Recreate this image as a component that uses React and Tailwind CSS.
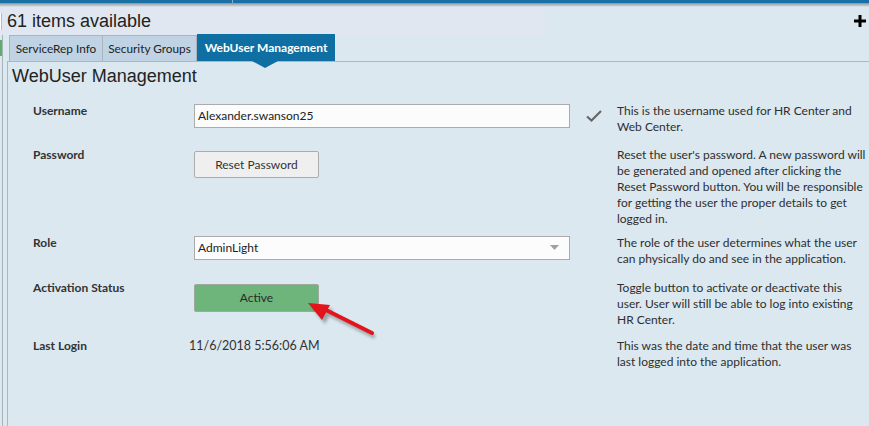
import React from 'react';

const FONT = { fontFamily: 'Lato, "Open Sans", sans-serif' };

const ROWS = [
    { id: 'user', label: 'Username', mt: 'mt-0', lines: ['This is the username used for HR Center and', 'Web Center.'] },
    {
        id: 'pass',
        label: 'Password',
        mt: 'mt-[12px]',
        lines: [
            "Reset the user's password. A new password will",
            'be generated and opened after clicking the',
            'Reset Password button. You will be responsible',
            'for getting the user the proper details to get',
            'logged in.',
        ],
    },
    { id: 'role', label: 'Role', mt: 'mt-[8px]', lines: ['The role of the user determines what the user', 'can physically do and see in the application.'] },
    {
        id: 'status',
        label: 'Activation Status',
        mt: 'mt-[13px]',
        lines: ['Toggle button to activate or deactivate this', 'user. User will still be able to log into existing', 'HR Center.'],
    },
    { id: 'login', label: 'Last Login', mt: 'mt-[10px]', lines: ['This was the date and time that the user was', 'last logged into the application.'] },
];

function Control({ id }) {
    if (id === 'user') {
        return (
            <div className="mt-[1px] w-[376px] h-[24px] border border-[#ababab] bg-[#fcfcfc] flex items-center px-[3px] text-[12px] text-[#222]">
                Alexander.swanson25
            </div>
        );
    }
    if (id === 'pass') {
        return (
            <button className="mt-[4px] w-[125px] h-[27px] border border-[#acacac] rounded-[2px] bg-[#efefef] text-[12px] text-[#333]">
                Reset Password
            </button>
        );
    }
    if (id === 'role') {
        return (
            <div className="mt-[1px] w-[376px] h-[24px] border border-[#ababab] bg-[#fcfcfc] flex items-center justify-between px-[3px] text-[12px] text-[#222]">
                <span>AdminLight</span>
                <svg width="9" height="6" viewBox="0 0 9 6" className="mr-[7px]">
                    <path d="M0 0h9L4.5 5z" fill="#a0a0a0" />
                </svg>
            </div>
        );
    }
    if (id === 'status') {
        return (
            <button className="mt-[4px] w-[125px] h-[28px] border border-[#9ea89f] rounded-[2px] bg-[#6db57a] text-[12px] text-[#2b2b2b]">
                Active
            </button>
        );
    }
    return <div className="-ml-[5px] text-[12.5px] text-[#333]">11/6/2018 5:56:06 AM</div>;
}

export default function App() {
    return (
        <div className="relative min-h-screen bg-[#dbe8f0] overflow-hidden" style={FONT}>
            {/* top bar */}
            <div className="h-[3px] bg-[#1870a4] flex">
                <div className="w-[232px]" />
                <div className="w-[1px] bg-[#7fb0d0]" />
            </div>
            <div className="h-[4px] bg-gradient-to-b from-[#8c9299] to-[#dde5ee]" />

            {/* header */}
            <div className="h-[28px] flex items-center">
                <div className="flex items-center h-full w-[545px] bg-[#e0e7f0]">
                    <div className="w-[2px] h-[17px] bg-white border-r border-[#b6bcc4]" />
                    <span className="ml-[5px] text-[18px] text-[#222]" style={{ fontFamily: '"Liberation Sans", Arial, sans-serif' }}>
                        61 items available
                    </span>
                </div>
                <div className="flex-1 flex justify-end pr-[3px]">
                    <svg width="12" height="12" viewBox="0 0 12 12">
                        <rect x="0" y="4.5" width="12" height="3" fill="#000" />
                        <rect x="4.5" y="0" width="3" height="12" fill="#000" />
                    </svg>
                </div>
            </div>

            <div className="flex">
                {/* left chrome */}
                <div className="w-[7px] shrink-0 flex">
                    <div className="w-[3px] border-r border-[#a9b1b9] flex flex-col pt-[5px]">
                        <div className="h-[16px] bg-[#5fae6b]" />
                    </div>
                </div>

                <div className="flex-1 min-h-[391px] flex flex-col">
                    {/* tabs */}
                    <div className="flex items-end h-[26px] pl-[2px] text-[11.8px]">
                        <div className="h-[26px] w-[94px] flex items-center justify-center bg-[#bfd3e5] border border-b-0 border-[#aab4bf] text-[#222]">
                            ServiceRep Info
                        </div>
                        <div className="h-[26px] w-[94px] flex items-center justify-center bg-[#bfd3e5] border border-l-0 border-b-0 border-[#aab4bf] text-[#222]">
                            Security Groups
                        </div>
                        <div className="relative h-[27px] w-[138px] flex items-center justify-center bg-[#0f6fa3] text-white font-bold text-[12px]">
                            WebUser Management
                            <svg width="26" height="7" viewBox="0 0 26 7" className="absolute left-[55px] -bottom-[7px]">
                                <path d="M0 0h26L13 7z" fill="#0f6fa3" />
                            </svg>
                        </div>
                    </div>

                    {/* panel */}
                    <div className="flex-1 border-l border-t border-[#b2b6ba] pl-[4px] pt-[4px]">
                        <h2 className="text-[18px] leading-[21px] text-[#222]" style={{ fontFamily: '"Liberation Sans", Arial, sans-serif' }}>
                            WebUser Management
                        </h2>

                        <div className="mt-[16px] pl-[21px] flex flex-col text-[#333]">
                            {ROWS.map(row => (
                                <div key={row.id} className={`flex items-start ${row.mt}`}>
                                    <div className="w-[161px] shrink-0 text-[12px] leading-[16px] font-bold text-[#333]">{row.label}</div>
                                    <div className="w-[376px] shrink-0 leading-[16px]">
                                        <Control id={row.id} />
                                    </div>
                                    <div className="w-[48px] shrink-0 flex justify-center pt-[7px]">
                                        {row.id === 'user' && (
                                            <svg width="16" height="12" viewBox="0 0 16 12">
                                                <path d="M1 6.5l4.5 4L15 1" fill="none" stroke="#666" strokeWidth="2.2" />
                                            </svg>
                                        )}
                                    </div>
                                    <div className="flex-1 -ml-[1px] text-[12px] leading-[16px] text-[#2e2e2e] whitespace-nowrap">
                                        {row.lines.map(l => (
                                            <div key={l}>{l}</div>
                                        ))}
                                    </div>
                                </div>
                            ))}
                        </div>
                    </div>
                </div>
            </div>

            {/* annotation arrow */}
            <svg width="90" height="50" viewBox="0 0 90 50" className="absolute left-[300px] top-[294px]">
                <g opacity="0.45" transform="translate(3 4)" style={{ filter: 'blur(1.5px)' }}>
                    <path d="M72 39L26 16" stroke="#555" strokeWidth="4" />
                    <path d="M8 9L30 11L22 26z" fill="#555" />
                </g>
                <path d="M72 39L26 16" stroke="#e3141b" strokeWidth="4" strokeLinecap="round" />
                <path d="M8 9L30 11L22 26z" fill="#e3141b" />
            </svg>
        </div>
    );
}
